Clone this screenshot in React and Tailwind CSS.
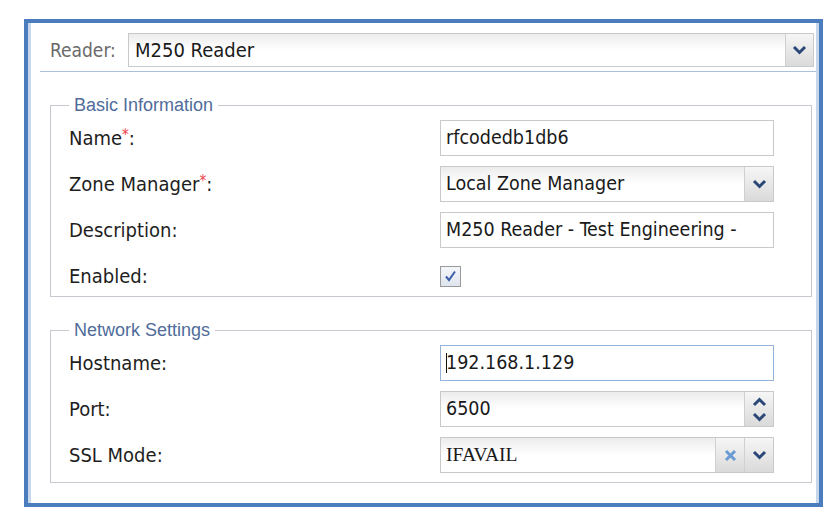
import React from "react";

const SANS = { fontFamily: '"DejaVu Sans Condensed", "DejaVu Sans", sans-serif' };

function Chevron({ up = false, className = "" }) {
  return (
    <svg width="15" height="10" viewBox="0 0 15 10" className={className}>
      <polyline
        points={up ? "2,8 7.5,2.5 13,8" : "2,2 7.5,7.5 13,2"}
        fill="none"
        stroke="#2b4777"
        strokeWidth="3"
        strokeLinecap="butt"
        strokeLinejoin="miter"
      />
    </svg>
  );
}

function DropBtn({ w = "w-[29px]" }) {
  return (
    <div className={`${w} h-full flex items-center justify-center border-l border-[#d0d0d0] bg-gradient-to-b from-[#f6f6f6] to-[#dadada]`}>
      <Chevron />
    </div>
  );
}

function Label({ children, req }) {
  return (
    <div className="h-[36px] flex items-center text-[20px] text-[#1e1e1e] leading-none" style={SANS}>
      {children}
      {req && <span className="text-[#f0444a] text-[15px] -mt-[6px]">*</span>}
      :
    </div>
  );
}

function Field({ children, grad, border = "border-[#c9c9c9]" }) {
  return (
    <div
      className={`h-[36px] w-[334px] flex items-stretch border ${border} ${
        grad ? "bg-gradient-to-b from-[#ececec] via-white to-white" : "bg-white"
      }`}
    >
      {children}
    </div>
  );
}

function FieldText({ children, serif }) {
  return (
    <div
      className="flex-1 flex items-center pl-[5px] text-[19.5px] text-[#1a1a1a] leading-none overflow-hidden whitespace-nowrap"
      style={serif ? { fontFamily: '"Liberation Serif", serif' } : SANS}
    >
      {children}
    </div>
  );
}

function Legend({ children }) {
  return (
    <legend
      className="px-[5px] h-[20px] leading-[20px] text-[18px] text-[#4f6c9a]"
      style={{ fontFamily: '"Liberation Sans", sans-serif' }}
    >
      {children}
    </legend>
  );
}

export default function App() {
  return (
    <div className="w-[839px] h-[522px] bg-white pt-[19px] pl-[24px]">
      <div className="w-[799px] h-[488px] border-[4px] border-[#4b7cbd] bg-white">
        <div className="h-full border-x-[3px] border-[#c6d6eb] flex flex-col">
          {/* Reader row */}
          <div className="flex items-stretch pt-[10px] pl-[19px] pr-[2px]">
            <div
              className="w-[78px] flex items-center text-[19px] text-[#6a6a6a] leading-none"
              style={SANS}
            >
              Reader:
            </div>
            <div className="flex-1 h-[34px] flex items-stretch border border-[#c9c9c9] bg-gradient-to-b from-[#ececec] via-white to-white">
              <div
                className="flex-1 flex items-center pl-[6px] text-[20px] text-[#1a1a1a] leading-none"
                style={SANS}
              >
                M250 Reader
              </div>
              <DropBtn w="w-[28px]" />
            </div>
          </div>
          <div className="mt-[4px] ml-[9px] h-[1px] bg-[#aac0dc]" />

          {/* Basic Information */}
          <fieldset className="mt-[23px] ml-[19px] mr-[4px] border border-[#c8c9d0] pl-[18px] pt-[5px] pb-[2px]">
            <Legend>Basic Information</Legend>
            <div className="grid grid-cols-[371px_334px] gap-y-[10px]">
              <Label req>Name</Label>
              <Field>
                <FieldText>rfcodedb1db6</FieldText>
              </Field>

              <Label req>Zone Manager</Label>
              <Field grad>
                <FieldText>Local Zone Manager</FieldText>
                <DropBtn />
              </Field>

              <Label>Description</Label>
              <Field>
                <FieldText>M250 Reader - Test Engineering -</FieldText>
              </Field>

              <Label>Enabled</Label>
              <div className="h-[36px] flex items-center">
                <div className="w-[21px] h-[21px] border border-[#9a9a9a] bg-gradient-to-b from-[#f4f6f9] to-[#dfe5ee] flex items-center justify-center">
                  <svg width="13" height="12" viewBox="0 0 13 12">
                    <polyline
                      points="2,6.5 5,10 11,1.5"
                      fill="none"
                      stroke="#3c5eab"
                      strokeWidth="2"
                    />
                  </svg>
                </div>
              </div>
            </div>
          </fieldset>

          {/* Network Settings */}
          <fieldset className="mt-[23px] ml-[19px] mr-[4px] border border-[#c8c9d0] pl-[18px] pt-[5px] pb-[9px]">
            <Legend>Network Settings</Legend>
            <div className="grid grid-cols-[371px_334px] gap-y-[10px]">
              <Label>Hostname</Label>
              <Field border="border-[#93b3da]">
                <FieldText>
                  <span className="inline-block w-[1px] h-[20px] bg-[#111]" />
                  <span className="-ml-[1px]">192.168.1.129</span>
                </FieldText>
              </Field>

              <Label>Port</Label>
              <Field grad>
                <FieldText>6500</FieldText>
                <div className="w-[29px] h-full flex flex-col items-center justify-center gap-[5px] border-l border-[#d0d0d0] bg-gradient-to-b from-[#f6f6f6] to-[#dadada]">
                  <Chevron up />
                  <Chevron />
                </div>
              </Field>

              <Label>SSL Mode</Label>
              <Field grad>
                <FieldText serif>IFAVAIL</FieldText>
                <div className="w-[29px] h-full flex items-center justify-center border-l border-[#d0d0d0] bg-gradient-to-b from-[#f6f6f6] to-[#dadada]">
                  <svg width="13" height="13" viewBox="0 0 13 13">
                    <path d="M2 2 L11 11 M11 2 L2 11" stroke="#6b9bd2" strokeWidth="3" />
                  </svg>
                </div>
                <DropBtn />
              </Field>
            </div>
          </fieldset>
        </div>
      </div>
    </div>
  );
}
